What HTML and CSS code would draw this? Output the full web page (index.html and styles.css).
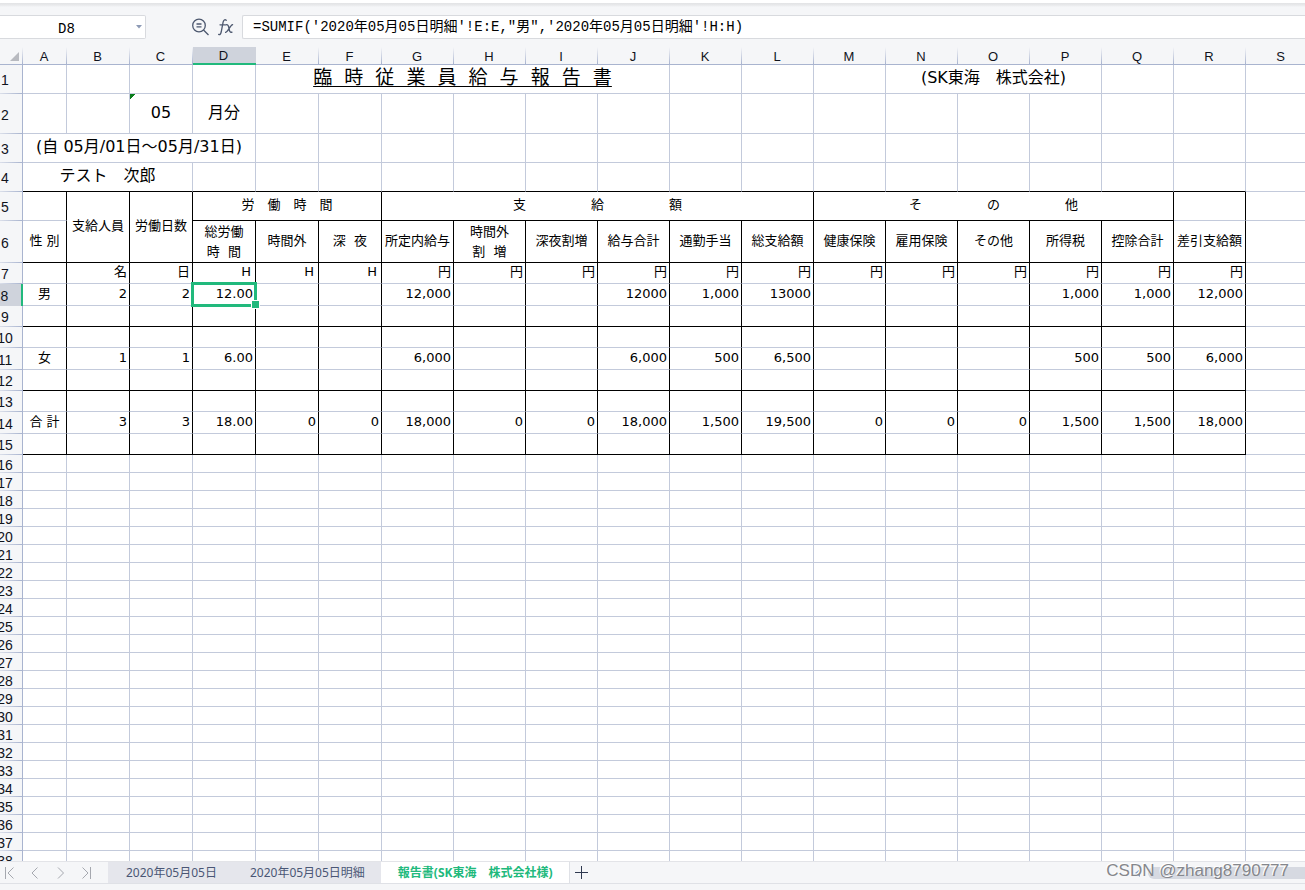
FILE: index.html
```html
<!DOCTYPE html>
<html lang="ja">
<head>
<meta charset="utf-8">
<title>臨時従業員給与報告書</title>
<link rel="stylesheet" href="styles.css">
</head>
<body>
<div class="ribbon-edge"></div>
<header class="formula-bar">
  <div class="name-box">
    <input class="name-input" type="text" value="D8" aria-label="セル番地">
    <button class="name-toggle" type="button" aria-label="名前の一覧"><svg width="6" height="4" viewBox="0 0 6 4"><path d="M0 0h6L3 3.500z" fill="#8d9ab5"/></svg></button>
  </div>
  <div class="formula-tools">
    <button class="tool" type="button" aria-label="数式を検索"><svg width="18" height="18" viewBox="0 0 18 18" fill="none" stroke="#4d586f" stroke-width="1.300"><circle cx="7" cy="7.500" r="6.300"/><path d="M4.500 6h5M4.500 8.800h5M11.500 12l5 5"/></svg></button>
    <button class="tool" type="button" aria-label="関数の挿入"><svg width="18" height="18" viewBox="0 0 18 18" fill="none" stroke="#4d586f" stroke-width="1.300" stroke-linecap="round"><path d="M8.300 2.200C6.800 1.200 5.600 1.900 5.100 4.200L3.200 14C2.700 16.200 1.900 17.200.7 16.400M2 6.800h5"/><path d="M7.800 6.800c2.500-.5 2.600 1 3.200 3.700.6 3 1 4.200 3 3.600M14.600 6.700c-2.500.5-4.300 7-7 7.600"/></svg></button>
  </div>
  <input class="formula-input" type="text" aria-label="数式" value="=SUMIF('2020年05月05日明細'!E:E,&quot;男&quot;,'2020年05月05日明細'!H:H)">
</header>

<main class="sheet">
<table class="grid">
<colgroup><col class="w-head"><col class="w-a"><col class="w-s" span="5"><col class="w-m" span="12"><col></colgroup>
<thead>
<tr><th class="corner"><svg width="9" height="9" viewBox="0 0 9 9"><path d="M9 0v9H0z" fill="#b8bac0"/></svg></th><th>A</th><th>B</th><th>C</th><th class="on">D</th><th>E</th><th>F</th><th>G</th><th>H</th><th>I</th><th>J</th><th>K</th><th>L</th><th>M</th><th>N</th><th>O</th><th>P</th><th>Q</th><th>R</th><th>S</th></tr>
</thead>
<tbody class="top">
<tr class="h29"><th>1</th><td></td><td></td><td></td><td></td><td colspan="6" class="title"><span class="underlined">臨  時  従  業  員  給  与  報  告  書</span></td><td></td><td></td><td></td><td colspan="3" class="big">(SK東海　株式会社)</td><td></td><td></td><td></td></tr>
<tr class="h40"><th>2</th><td></td><td></td><td class="big noted">05</td><td class="big">月分</td><td></td><td></td><td></td><td></td><td></td><td></td><td></td><td></td><td></td><td></td><td></td><td></td><td></td><td></td><td></td></tr>
<tr class="h29"><th>3</th><td colspan="4" class="big">(自 05月/01日～05月/31日)</td><td></td><td></td><td></td><td></td><td></td><td></td><td></td><td></td><td></td><td></td><td></td><td></td><td></td><td></td><td></td></tr>
<tr class="h29 rule"><th>4</th><td colspan="3" class="big">テスト　次郎</td><td></td><td></td><td></td><td></td><td></td><td></td><td></td><td></td><td></td><td></td><td></td><td></td><td></td><td></td><td></td><td></td></tr>
</tbody>
<tbody class="report heads">
<tr class="h29"><th>5</th><td></td><td rowspan="2" class="ruled">支給人員</td><td rowspan="2" class="ruled">労働日数</td><td colspan="3" class="ruled">労　働　時　間</td><td colspan="6" class="ruled">支　　　　　給　　　　　額</td><td colspan="5" class="ruled">そ　　　　　の　　　　　他</td><td></td><td></td></tr>
<tr class="h42 rule"><th>6</th><td>性 別</td><td class="two">総労働<br>時  間</td><td>時間外</td><td>深  夜</td><td>所定内給与</td><td class="two">時間外<br>割  増</td><td>深夜割増</td><td>給与合計</td><td>通勤手当</td><td>総支給額</td><td>健康保険</td><td>雇用保険</td><td>その他</td><td>所得税</td><td>控除合計</td><td>差引支給額</td><td></td></tr>
</tbody>
<tbody class="report values">
<tr class="h21 units"><th>7</th><td></td><td>名</td><td>日</td><td class="hour">H</td><td class="hour">H</td><td class="hour">H</td><td>円</td><td>円</td><td>円</td><td>円</td><td>円</td><td>円</td><td>円</td><td>円</td><td>円</td><td>円</td><td>円</td><td>円</td><td></td></tr>
<tr class="h22"><th class="on">8</th><td>男</td><td>2</td><td>2</td><td class="selected">12.00</td><td></td><td></td><td>12,000</td><td></td><td></td><td>12000</td><td>1,000</td><td>13000</td><td></td><td></td><td></td><td>1,000</td><td>1,000</td><td>12,000</td><td></td></tr>
<tr class="h21 rule"><th>9</th><td></td><td></td><td></td><td></td><td></td><td></td><td></td><td></td><td></td><td></td><td></td><td></td><td></td><td></td><td></td><td></td><td></td><td></td><td></td></tr>
<tr class="h21"><th>10</th><td></td><td></td><td></td><td></td><td></td><td></td><td></td><td></td><td></td><td></td><td></td><td></td><td></td><td></td><td></td><td></td><td></td><td></td><td></td></tr>
<tr class="h22"><th>11</th><td>女</td><td>1</td><td>1</td><td>6.00</td><td></td><td></td><td>6,000</td><td></td><td></td><td>6,000</td><td>500</td><td>6,500</td><td></td><td></td><td></td><td>500</td><td>500</td><td>6,000</td><td></td></tr>
<tr class="h21 rule"><th>12</th><td></td><td></td><td></td><td></td><td></td><td></td><td></td><td></td><td></td><td></td><td></td><td></td><td></td><td></td><td></td><td></td><td></td><td></td><td></td></tr>
<tr class="h21"><th>13</th><td></td><td></td><td></td><td></td><td></td><td></td><td></td><td></td><td></td><td></td><td></td><td></td><td></td><td></td><td></td><td></td><td></td><td></td><td></td></tr>
<tr class="h22"><th>14</th><td>合 計</td><td>3</td><td>3</td><td>18.00</td><td>0</td><td>0</td><td>18,000</td><td>0</td><td>0</td><td>18,000</td><td>1,500</td><td>19,500</td><td>0</td><td>0</td><td>0</td><td>1,500</td><td>1,500</td><td>18,000</td><td></td></tr>
<tr class="h21 rule"><th>15</th><td></td><td></td><td></td><td></td><td></td><td></td><td></td><td></td><td></td><td></td><td></td><td></td><td></td><td></td><td></td><td></td><td></td><td></td><td></td></tr>
</tbody>
<tbody class="blank" id="blank-rows"></tbody>
</table>
</main>

<footer class="tab-bar">
  <div class="tab-nav">
    <button type="button" aria-label="先頭のシート"><svg width="12" height="14" viewBox="0 0 12 14"><path d="M2.500 1v12M10.500 1.500L5 7l5.500 5.500"/></svg></button>
    <button type="button" aria-label="前のシート"><svg width="12" height="14" viewBox="0 0 12 14"><path d="M8.500 1.500L3 7l5.500 5.500"/></svg></button>
    <button type="button" aria-label="次のシート"><svg width="12" height="14" viewBox="0 0 12 14"><path d="M3 1.500L8.500 7 3 12.500"/></svg></button>
    <button type="button" aria-label="最後のシート"><svg width="12" height="14" viewBox="0 0 12 14"><path d="M1.500 1.500L7 7l-5.500 5.500M9.500 1v12"/></svg></button>
  </div>
  <button class="tab" type="button">2020年05月05日</button>
  <button class="tab" type="button">2020年05月05日明細</button>
  <button class="tab current" type="button">報告書(SK東海　株式会社様)</button>
  <button class="add" type="button" aria-label="シートを追加"><svg width="13" height="13" viewBox="0 0 13 13"><path d="M6.500 0v13M0 6.500h13" stroke="#2f3950"/></svg></button>
  <div class="scroll"><svg width="5" height="8" viewBox="0 0 5 8"><path d="M5 0v8L0 4z" fill="#8d9ab5"/></svg><div class="thumb"></div></div>
  <div class="watermark">CSDN @zhang8790777</div>
</footer>
<div class="status-edge"></div>
<script src="rows.js"></script>
</body>
</html>
```

FILE: styles.css
```css
* { box-sizing: border-box; }

body {
  margin: 0;
  height: 100vh;
  display: flex;
  flex-direction: column;
  overflow: hidden;
  background: #f5f6f8;
  color: #000;
  font-family: "DejaVu Sans", "Noto Sans CJK JP", sans-serif;
  font-size: 13px;
}

button, input { font: inherit; margin: 0; padding: 0; border: 0; background: none; }
svg { display: block; }

.ribbon-edge {
  height: 7px;
  flex: none;
  background: linear-gradient(#fff 3px, #e2e3e5 3px, #e8e9eb 5px, #f5f6f8);
}

/* Formula bar */
.formula-bar {
  flex: none;
  height: 40px;
  display: flex;
  align-items: center;
}
.name-box {
  width: 146px;
  height: 24px;
  display: flex;
  align-items: center;
  background: #fff;
  border: 1px solid #d8dade;
  border-left: 0;
  border-radius: 0 2px 2px 0;
}
.name-input {
  flex: 1;
  min-width: 0;
  padding-top: 3px;
  text-align: center;
  font-family: "Liberation Mono", monospace;
  font-size: 14px;
}
.name-toggle { width: 12px; height: 22px; display: grid; place-items: center; }
.formula-tools {
  width: 96px;
  display: flex;
  justify-content: flex-end;
  gap: 8px;
  padding-right: 6px;
}
.formula-input {
  flex: 1;
  min-width: 0;
  height: 24px;
  padding: 0 10px 4px;
  background: #fff;
  border: 1px solid #d8dade;
  border-right: 0;
  border-radius: 2px 0 0 2px;
  font-family: "Liberation Mono", "Noto Sans CJK JP", monospace;
  font-size: 14px;
}

/* Sheet: the row header column starts beyond the window's left edge,
   and the last column runs on past the right one */
.sheet {
  flex: 1;
  min-height: 0;
  overflow: hidden;
  margin-left: -12px;
  background: #fff;
}
.grid {
  width: calc(100% + 12px);
  table-layout: fixed;
  border-collapse: separate;
  border-spacing: 0;
}
.w-head { width: 35px; }
.w-a { width: 44px; }
.w-s { width: 63px; }
.w-m { width: 72px; }

.grid th {
  padding: 2px 0 0;
  font-family: "Liberation Sans", sans-serif;
  font-size: 14px;
  font-weight: 400;
  line-height: 15px;
  color: #10131c;
  text-align: center;
}
.grid thead th {
  height: 18px;
  padding-right: 2px;
  font-size: 13px;
  border-bottom: 1px solid #a9b4cf;
  background: linear-gradient(#f5f6f8, #a9b4cf) right / 1px 100% no-repeat #f5f6f8;
}
.grid thead th.on {
  border-bottom: 2px solid #21b97c;
  line-height: 14px;
  background: #cfd3dc;
}
.grid .corner svg { margin: 0 2px 0 auto; }
.grid tbody th {
  border-right: 1px solid #a9b4cf;
  background: linear-gradient(90deg, #f5f6f8, #a9b4cf) bottom / 100% 1px no-repeat #f5f6f8;
}
.grid tbody th.on {
  border-right: 2px solid #21b97c;
  background: #cfd3dc;
}

.grid td {
  padding: 0;
  border-right: 1px solid #c3cadb;
  border-bottom: 1px solid #c3cadb;
  text-align: center;
  line-height: 18px;
  white-space: pre;
}
.grid .blank td { line-height: 16px; }

.h21 { height: 21px; }
.h22 { height: 22px; }
.h29 { height: 29px; }
.h40 { height: 40px; }
.h42 { height: 42px; }
.blank tr { height: 18px; }

.grid .big { padding-bottom: 2px; font-size: 16px; }
.grid .title { padding-bottom: 4px; font-size: 19px; }
.underlined { text-decoration: underline; text-decoration-thickness: 1px; text-underline-offset: 2px; }
.noted { background: linear-gradient(135deg, #0a7d1c 4px, transparent 4px) no-repeat; }

.report td:not(:last-child) { border-right-color: #000; }
.rule td:not(:last-child), .grid .ruled { border-bottom-color: #000; }
.heads td { padding-bottom: 2px; }
.grid .two { padding-bottom: 0; line-height: 20px; }

.values td { padding: 0 2px 2px 0; text-align: right; }
.values td:nth-child(2) { padding-right: 0; text-align: center; }
.grid .hour { padding-right: 4px; }

/* Active cell and its fill handle */
.selected { position: relative; }
.selected::before {
  content: "";
  position: absolute;
  inset: -2px;
  border: 3px solid #21b97c;
}
.selected::after {
  content: "";
  position: absolute;
  right: -5px;
  bottom: -4px;
  width: 7px;
  height: 7px;
  background: #21b97c;
  border: 1px solid #fff;
}

/* Sheet tabs */
.tab-bar {
  position: relative;
  flex: none;
  height: 23px;
  display: flex;
  border-top: 1px solid #e3e4e8;
  border-bottom: 1px solid #dfe1e6;
  font-family: "Noto Sans", "Noto Sans CJK JP", sans-serif;
  font-size: 12px;
}
.tab-nav {
  width: 108px;
  display: flex;
  align-items: center;
  gap: 14px;
  padding-left: 3px;
}
.tab-nav svg { fill: none; stroke: #a5a8af; stroke-width: 1; }
.tab {
  padding: 0 16px 2px 17px;
  background: #e5e6ec;
  color: #4a5675;
  white-space: nowrap;
}
.tab:first-of-type { padding-left: 18px; }
.tab.current {
  background: #fff;
  border-right: 1px solid #dfe1e6;
  color: #21b97c;
  font-weight: 700;
}
.add { width: 24px; display: grid; place-items: center; }
.scroll {
  flex: 1;
  display: flex;
  justify-content: flex-end;
  align-items: center;
  gap: 8px;
}
.thumb {
  width: 157px;
  height: 12px;
  border-radius: 6px 0 0 6px;
  background: #d6d9e1;
}
.watermark {
  position: absolute;
  right: 16px;
  top: -1px;
  font-family: "Liberation Sans", sans-serif;
  font-size: 17px;
  line-height: 20px;
  color: #85878c;
  text-shadow: -1px -1px 0 #fff;
}
.status-edge { flex: none; height: 6px; }
```

FILE: rows.js
```js
// Fill the rest of the sheet with empty rows, A to S.
const body = document.getElementById("blank-rows");
for (let n = 16; n <= 38; n++) {
  const row = body.insertRow();
  const head = document.createElement("th");
  head.textContent = n;
  row.append(head);
  for (let c = 0; c < 19; c++) row.insertCell();
}
```
